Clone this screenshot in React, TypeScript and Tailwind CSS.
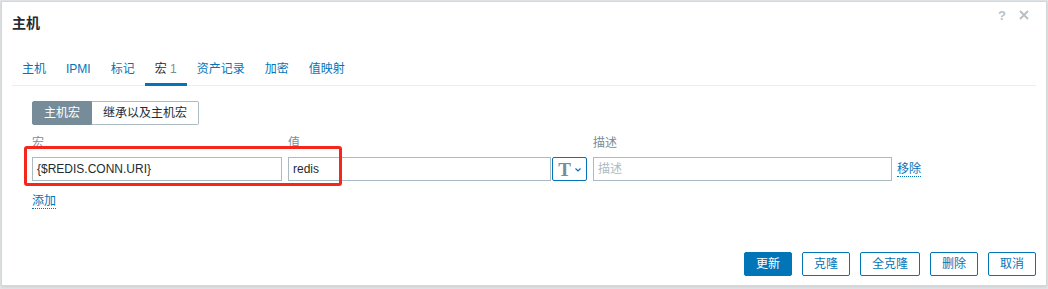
import React from "react";

// 主机宏编辑弹窗（宏 标签页）
const tabs = ["主机", "IPMI", "标记", "宏", "资产记录", "加密", "值映射"];

function Tab({ label, active }: { label: string; active?: boolean }) {
  if (active) {
    return (
      <li className="-mb-px border-b-[3px] border-[#0275b8] px-[10px] pt-[10px] pb-[7px] leading-[14px] text-[#1f2c33]">
        {label} <span className="text-[#768d99]">1</span>
      </li>
    );
  }
  return (
    <li className="-mb-px border-b-[3px] border-transparent px-[10px] pt-[10px] pb-[7px] leading-[14px] text-[#0275b8]">
      {label}
    </li>
  );
}

function Btn({ label, primary }: { label: string; primary?: boolean }) {
  return (
    <button
      className={
        primary
          ? "h-[24px] rounded-[2px] border border-[#0275b8] bg-[#0275b8] px-[11px] leading-[14px] text-white"
          : "h-[24px] rounded-[2px] border border-[#0275b8] bg-white px-[11px] leading-[14px] text-[#0275b8]"
      }
    >
      {label}
    </button>
  );
}

export default function App() {
  return (
    <div
      className="relative h-[289px] w-[1048px] bg-[#e4e7e9] pl-[1px] pt-[1px] text-[12px]"
      style={{ fontFamily: '"Liberation Sans", Arial, "Noto Sans CJK SC", sans-serif' }}
    >
      <div className="flex h-[285px] w-[1046px] flex-col border border-[#d3d8db] bg-white shadow-[0_1px_3px_rgba(0,0,0,0.12)]">
        {/* header */}
        <div className="flex h-[42px] shrink-0 items-center justify-between px-[10px]">
          <h4 className="text-[14px] font-bold text-[#1f2c33]">主机</h4>
          <div className="-mt-[16px] flex items-center gap-[13px] pr-[7px] text-[#b7c1c7]">
            <span className="text-[13px] font-bold leading-none">?</span>
            <svg width="10" height="10" viewBox="0 0 10 10">
              <path d="M1 1 L9 9 M9 1 L1 9" stroke="currentColor" strokeWidth="2" />
            </svg>
          </div>
        </div>

        {/* tabs */}
        <div className="mt-[8px] px-[10px]">
          <ul className="flex border-b border-[#ebeef0]">
            {tabs.map((t) => (
              <Tab key={t} label={t} active={t === "宏"} />
            ))}
          </ul>

          <div className="pl-[20px] pt-[15px]">
            {/* segmented */}
            <div className="flex">
              <div className="flex h-[24px] w-[60px] items-center justify-center rounded-l-[2px] border border-[#768d99] bg-[#768d99] text-white">
                主机宏
              </div>
              <div className="flex h-[24px] w-[107px] items-center justify-center rounded-r-[2px] border border-l-0 border-[#acbbc2] bg-white text-[#1f2c33]">
                继承以及主机宏
              </div>
            </div>

            {/* macro table */}
            <div className="mt-[11px] grid grid-cols-[250px_299px_299px_auto] gap-x-[6px]">
              <div className="leading-[14px] text-[#768d99]">宏</div>
              <div className="leading-[14px] text-[#768d99]">值</div>
              <div className="leading-[14px] text-[#768d99]">描述</div>
              <div />

              <div className="mt-[7px] flex h-[24px] items-center border border-[#acbbc2] px-[4px] text-[#1f2c33]">
                {"{$REDIS.CONN.URI}"}
              </div>
              <div className="mt-[7px] flex h-[24px] gap-[1px]">
                <div className="flex h-[24px] w-[263px] items-center border border-[#acbbc2] px-[4px] text-[#1f2c33]">
                  redis
                </div>
                <div className="flex h-[24px] w-[35px] items-center justify-center gap-[4px] rounded-[2px] border border-[#0275b8] bg-white">
                  <span
                    className="text-[19px] font-bold leading-none text-[#768d99]"
                    style={{ fontFamily: '"Liberation Serif", serif' }}
                  >
                    T
                  </span>
                  <svg width="6" height="4" viewBox="0 0 6 4" className="mt-[1px]">
                    <path d="M0.5 0.5 L3 3 L5.5 0.5" fill="none" stroke="#0275b8" strokeWidth="1.2" />
                  </svg>
                </div>
              </div>
              <div className="mt-[7px] flex h-[24px] items-center border border-[#acbbc2] px-[4px] text-[#acbbc2]">
                描述
              </div>
              <div className="mt-[7px] flex h-[24px] items-center">
                <span className="-ml-[1px] border-b border-dotted border-[#0275b8] leading-[14px] text-[#0275b8]">
                  移除
                </span>
              </div>
            </div>

            <div className="mt-[11px]">
              <span className="inline-block border-b border-dotted border-[#0275b8] leading-[14px] text-[#0275b8]">
                添加
              </span>
            </div>
          </div>
        </div>

        {/* footer */}
        <div className="mt-auto flex justify-end gap-[10px] pb-[9px] pr-[10px]">
          <Btn label="更新" primary />
          <Btn label="克隆" />
          <Btn label="全克隆" />
          <Btn label="删除" />
          <Btn label="取消" />
        </div>
      </div>

      {/* 红框标注 */}
      <div className="absolute left-[24px] top-[146px] h-[40px] w-[318px] rounded-[3px] border-[3px] border-[#f5271c]" />
    </div>
  );
}
